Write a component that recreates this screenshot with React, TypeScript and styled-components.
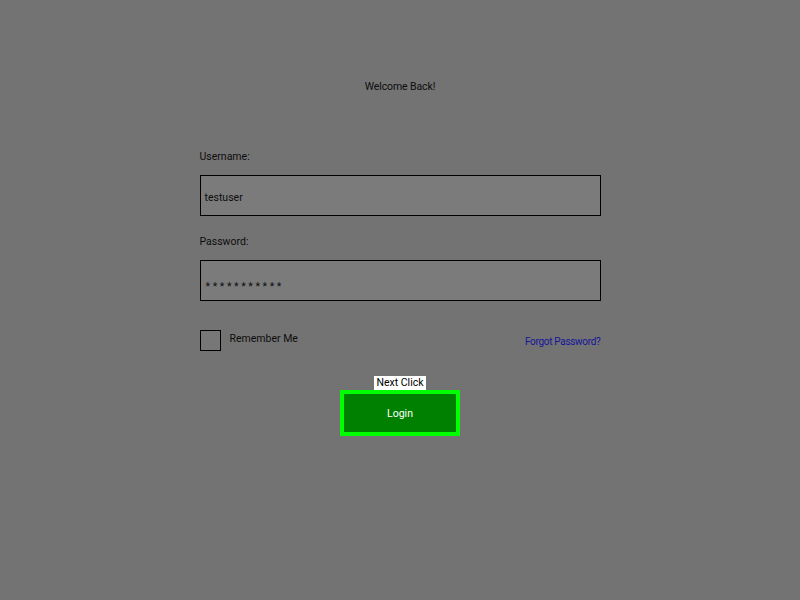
import React from "react";
import styled, {createGlobalStyle} from "styled-components";

const GlobalStyle = createGlobalStyle`
    html, body {
        margin: 0;
        padding: 0;
        background: #737373;
        font-family: Roboto, "Liberation Sans", sans-serif;
    }
`

const Page = styled.div`
    width: 800px;
    height: 600px;
    background: #737373;
    display: flex;
    flex-direction: column;
    align-items: center;
    color: #0d0d0d;
    font-size: 10.5px;
`

const Title = styled.h1`
    margin: 80px 0 0;
    font-size: 10.5px;
    font-weight: 400;
    line-height: 14px;
    letter-spacing: -0.1px;
`

const Form = styled.div`
    width: 401px;
    margin-top: 55px;
    display: flex;
    flex-direction: column;
`

const Label = styled.label`
    display: block;
    line-height: 16px;
    height: 16px;
`

const Field = styled.div<{ $masked?: boolean }>`
    box-sizing: border-box;
    height: 41px;
    margin-top: 10px;
    margin-bottom: 18px;
    border: 1px solid #000;
    background: #7b7b7b;
    padding: ${p => (p.$masked ? "19px 5px 0" : "15px 4px 0")};
    line-height: 14px;
`

const OptionsRow = styled.div`
    display: flex;
    justify-content: space-between;
    align-items: center;
    margin-top: 11px;
    height: 21px;
`

const Remember = styled.div`
    display: flex;
    align-items: center;
    gap: 9px;
`

const CheckBox = styled.span`
    box-sizing: border-box;
    width: 21px;
    height: 21px;
    border: 1px solid #000;
    background: #777;
`

const RememberText = styled.span`
    margin-top: -5px;
`

const ForgotLink = styled.a`
    color: #15159a;
    text-decoration: none;
    font-size: 10px;
    letter-spacing: -0.3px;
    margin-top: 1px;
`

const ActionArea = styled.div`
    display: flex;
    flex-direction: column;
    align-items: center;
    margin-top: 25px;
`

const Hint = styled.span`
    background: #fff;
    color: #000;
    line-height: 14px;
    padding: 0 2px;
`

const LoginButton = styled.button`
    box-sizing: border-box;
    width: 120px;
    height: 46px;
    margin-top: 0;
    border: 4px solid #00ff00;
    background: #008000;
    color: #fff;
    font-family: Roboto, "Liberation Sans", sans-serif;
    font-size: 10.5px;
`

export default function App() {
    return (
        <>
            <GlobalStyle/>
            <Page>
                <Title>Welcome Back!</Title>
                <Form>
                    <Label>Username:</Label>
                    <Field>testuser</Field>
                    <Label>Password:</Label>
                    <Field $masked>* * * * * * * * * * *</Field>
                    <OptionsRow>
                        <Remember>
                            <CheckBox/>
                            <RememberText>Remember Me</RememberText>
                        </Remember>
                        <ForgotLink href="#">Forgot Password?</ForgotLink>
                    </OptionsRow>
                </Form>
                <ActionArea>
                    <Hint>Next Click</Hint>
                    <LoginButton>Login</LoginButton>
                </ActionArea>
            </Page>
        </>
    )
}
